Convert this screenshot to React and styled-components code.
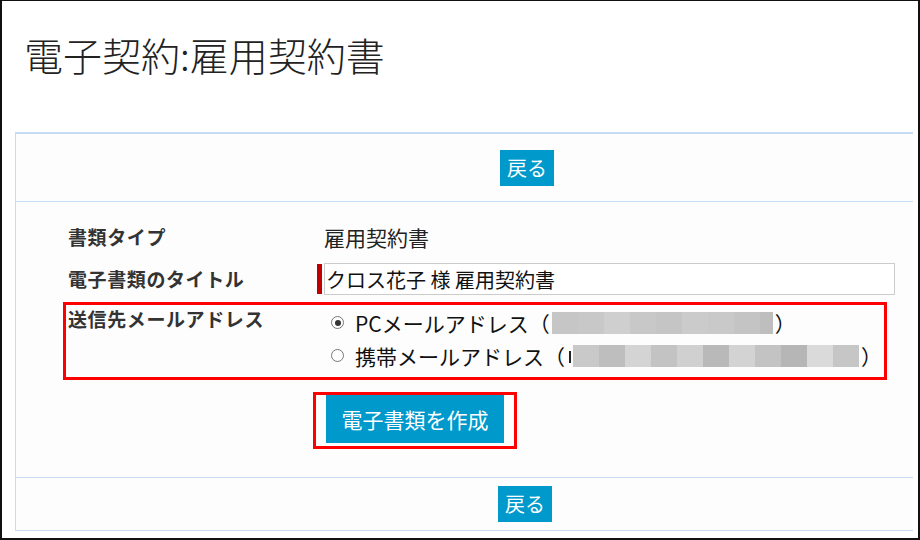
import React from 'react';
import styled, { createGlobalStyle } from 'styled-components';

const GlobalStyle = createGlobalStyle`
  html, body {
    margin: 0;
    padding: 0;
    background: #fff;
  }
  body {
    font-family: "Noto Sans CJK JP", "Noto Sans", sans-serif;
    color: #222;
  }
`;

const Frame = styled.div`
  box-sizing: border-box;
  width: 920px;
  height: 540px;
  border: 2px solid #111;
  border-top-width: 1px;
  overflow: hidden;
  background: #fff;
`;

const Title = styled.h1`
  margin: 0;
  padding: 27px 0 0 22px;
  font-size: 39px;
  font-weight: 300;
  line-height: 52px;
  color: #222;
`;

const Panel = styled.section`
  margin: 52px 0 0 13px;
  width: 897px;
  border-left: 1px solid #c6dcf4;
  border-top: 2px solid #c6dcf4;
  background: #fdfdfd;
`;

const Toolbar = styled.div`
  display: flex;
  align-items: center;
  height: ${p => p.$height}px;
  padding-left: ${p => p.$offset}px;
  border-bottom: 1px solid #c6dcf4;
  border-top: ${p => (p.$top ? '1px solid #c6dcf4' : 'none')};
`;

const BlueButton = styled.button`
  border: none;
  margin: 0;
  background: #0099cc;
  color: #fff;
  font-family: inherit;
  cursor: pointer;
`;

const BackButton = styled(BlueButton)`
  height: 36px;
  padding: 0 7px;
  font-size: 20px;
  line-height: 36px;
`;

const Form = styled.div`
  box-sizing: border-box;
  height: 275px;
  padding: 18px 18px 0 47px;
  display: flex;
  flex-direction: column;
`;

const Row = styled.div`
  display: grid;
  grid-template-columns: 249px 1fr;
  align-items: ${p => (p.$top ? 'start' : 'center')};
  box-sizing: border-box;
  height: ${p => p.$height}px;
  margin-top: ${p => p.$gap || 0}px;
  padding-left: 5px;
`;

const MarkedRow = styled(Row)`
  border: 3px solid #f00;
  padding-left: 2px;
  margin-right: 8px;
`;

const Label = styled.div`
  font-size: 19px;
  font-weight: 700;
  letter-spacing: 0.6px;
  line-height: 28px;
  color: #333;
`;

const Value = styled.div`
  padding-left: 7px;
  font-size: 21px;
  line-height: 28px;
  color: #222;
`;

const InputWrap = styled.div`
  display: flex;
  align-items: center;
  height: 32px;
`;

const RequiredBar = styled.span`
  width: 5px;
  height: 30px;
  margin-right: 2px;
  background: #c00000;
`;

const TextBox = styled.input`
  flex: 1;
  box-sizing: border-box;
  height: 32px;
  margin: 0;
  padding: 0 1px;
  border: 1px solid #ccc;
  background: #fff;
  font-family: inherit;
  font-size: 20px;
  color: #111;
  outline: none;
`;

const Options = styled.div`
  display: flex;
  flex-direction: column;
  padding-top: 1px;
`;

const Option = styled.label`
  display: flex;
  align-items: center;
  height: 33px;
  padding-left: 14px;
  font-size: 21px;
  color: #111;
`;

const Radio = styled.span`
  position: relative;
  box-sizing: border-box;
  width: 13px;
  height: 13px;
  margin-right: 11px;
  border: 1px solid #777;
  border-radius: 50%;
  background: #fff;

  &::after {
    content: '';
    display: ${p => (p.$checked ? 'block' : 'none')};
    position: absolute;
    left: 2.5px;
    top: 2.5px;
    width: 6px;
    height: 6px;
    border-radius: 50%;
    background: #333;
  }
`;

const Redacted = styled.span`
  display: inline-flex;
  align-items: center;
  height: 22px;
  margin: 0 2px 0 ${p => p.$shift || 0}px;
`;

const Pixel = styled.span`
  width: ${p => p.$w}px;
  height: 22px;
  background: ${p => p.$c};
`;

const Stub = styled.span`
  width: 2px;
  height: 12px;
  margin: 2px 2px 0 4px;
  background: #222;
`;

const CreateFrame = styled.div`
  align-self: flex-start;
  margin: 12px 0 0 250px;
  padding: 0 10px 3px 10px;
  border: 3px solid #f00;
  display: flex;
`;

const CreateButton = styled(BlueButton)`
  width: 178px;
  height: 48px;
  padding: 0;
  font-size: 21px;
`;

const pcBlocks = ['#c6c6c6', '#c8c8c8', '#cfcfcf', '#c8c8c8', '#c5c5c5', '#cbcbcb', '#c9c9c9', '#c4c4c4', '#bebebe'];
const mobileBlocks = ['#c9c9c9', '#bebebe', '#d4d4d4', '#c3c3c3', '#d0d0d0', '#b9b9b9', '#d3d3d3', '#c3c3c3', '#b6b6b6', '#dadada', '#c6c6c6'];

export default function App() {
  return (
    <>
      <GlobalStyle />
      <Frame>
        <Title>電子契約:雇用契約書</Title>
        <Panel>
          <Toolbar $height={67} $offset={484}>
            <BackButton>戻る</BackButton>
          </Toolbar>
          <Form>
            <Row $height={34}>
              <Label>書類タイプ</Label>
              <Value>雇用契約書</Value>
            </Row>
            <Row $height={36} $gap={7}>
              <Label>電子書類のタイトル</Label>
              <InputWrap>
                <RequiredBar />
                <TextBox defaultValue="クロス花子 様 雇用契約書" />
              </InputWrap>
            </Row>
            <MarkedRow $height={78} $gap={5} $top>
              <Label>送信先メールアドレス</Label>
              <Options>
                <Option>
                  <Radio $checked />
                  PCメールアドレス（
                  <Redacted $shift={2}>
                    {pcBlocks.map((c, i) => (
                      <Pixel key={i} $c={c} $w={i === pcBlocks.length - 1 ? 13 : 26} />
                    ))}
                  </Redacted>
                  ）
                </Option>
                <Option>
                  <Radio />
                  携帯メールアドレス（
                  <Redacted $shift={0}>
                    <Stub />
                    {mobileBlocks.map((c, i) => (
                      <Pixel key={i} $c={c} $w={26} />
                    ))}
                  </Redacted>
                  ）
                </Option>
              </Options>
            </MarkedRow>
            <CreateFrame>
              <CreateButton>電子書類を作成</CreateButton>
            </CreateFrame>
          </Form>
          <Toolbar $height={52} $offset={482} $top>
            <BackButton>戻る</BackButton>
          </Toolbar>
        </Panel>
      </Frame>
    </>
  );
}
